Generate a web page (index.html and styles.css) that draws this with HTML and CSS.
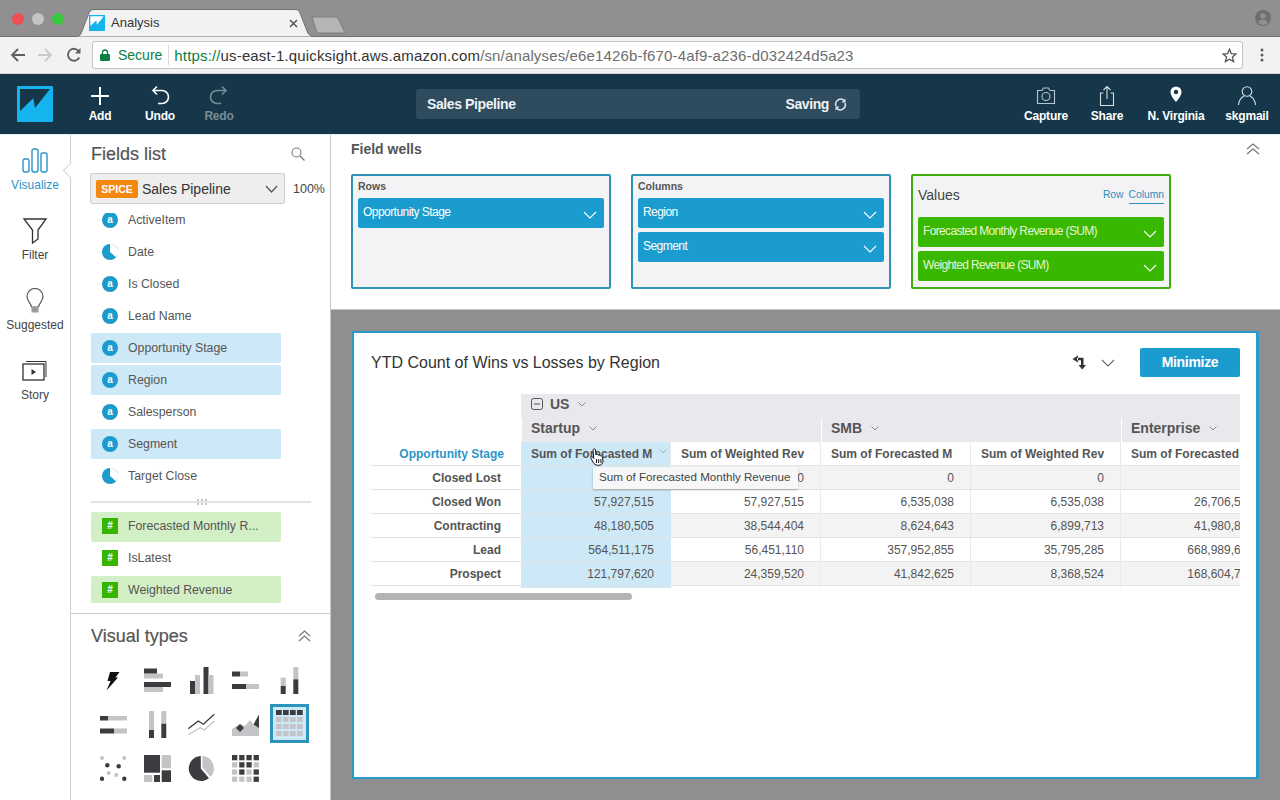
FILE: index.html
```html
<!DOCTYPE html>
<html lang="en">
<head>
<meta charset="utf-8">
<title>Analysis</title>
<link rel="stylesheet" href="styles.css">
</head>
<body>
<div class="page">
  <div class="tabstrip">
    <div class="lights"><i class="light red"></i><i class="light grey"></i><i class="light green"></i></div>
    <div class="tab">
      <svg class="tab-shape" width="242" height="28" viewBox="0 0 242 28"><path d="M0 28 C6 28 7 25 8 22 L15 4 C16 1 18 .5 21 .5 H220 C223 .5 225 1 226 4 L233 22 C234 25 236 28 242 28 Z" fill="#f2f2f4" stroke="#6f6e70"/></svg>
      <svg class="favicon" width="16" height="16" viewBox="0 0 36 36"><rect width="36" height="36" fill="#15b4ee"/><path d="M3 3H33L18 22 16.300 12.300 3 25Z" fill="#fff"/></svg>
      <span class="tab-title">Analysis</span>
      <svg class="tab-close" width="9" height="9" viewBox="0 0 9 9"><path d="M1 1 8 8M8 1 1 8" stroke="#555" stroke-width="1.500"/></svg>
    </div>
    <svg class="newtab" width="36" height="18" viewBox="0 0 36 18"><path d="M1 1H24C26 1 27 2 28 4L34 17H9C7 17 6 16 5.500 15Z" fill="#b5b4b6" stroke="#7d7c7e"/></svg>
    <svg class="profile" width="16" height="16" viewBox="0 0 16 16"><circle cx="8" cy="8" r="8" fill="#6e6d6f"/><circle cx="8" cy="6" r="2.800" fill="#918f91"/><path d="M3 12.500C4 10 6 9.700 8 9.700S12 10 13 12.500C12 14 10 15 8 15S4 14 3 12.500Z" fill="#918f91"/></svg>
  </div>

  <div class="toolbar">
    <svg class="nav-ico" width="16" height="16" viewBox="0 0 16 16"><path d="M15 8H2M8 2 2 8l6 6" fill="none" stroke="#5f5f5f" stroke-width="1.800"/></svg>
    <svg class="nav-ico fwd" width="16" height="16" viewBox="0 0 16 16"><path d="M1 8H14M8 2l6 6-6 6" fill="none" stroke="#c9c9c9" stroke-width="1.800"/></svg>
    <svg class="nav-ico" width="16" height="16" viewBox="0 0 16 16"><path d="M13.300 10.500A6 6 0 1 1 13 4.500" fill="none" stroke="#5f5f5f" stroke-width="1.800"/><path d="M14.500 1V6.500H9Z" fill="#5f5f5f"/></svg>
    <div class="omnibox">
      <svg class="lock" width="10" height="12" viewBox="0 0 10 12"><rect y="5" width="10" height="7" rx="1" fill="#0b8043"/><path d="M2.500 5.500V3.500a2.500 2.500 0 0 1 5 0v2" fill="none" stroke="#0b8043" stroke-width="1.300"/></svg>
      <span class="secure">Secure</span>
      <i class="omni-sep"></i>
      <span class="url"><span class="scheme">https://</span><span class="host">us-east-1.quicksight.aws.amazon.com</span><span class="path">/sn/analyses/e6e1426b-f670-4af9-a236-d032424d5a23</span></span>
      <svg class="star" width="15" height="15" viewBox="0 0 15 15"><path d="M7.500 1.300 9.300 5.600 14 6 10.400 9 11.500 13.600 7.500 11.200 3.500 13.600 4.600 9 1 6 5.700 5.600Z" fill="none" stroke="#555" stroke-width="1.300"/></svg>
    </div>
    <svg class="menu-dots" width="4" height="14" viewBox="0 0 4 14"><circle cx="2" cy="2" r="1.500" fill="#5f5f5f"/><circle cx="2" cy="7" r="1.500" fill="#5f5f5f"/><circle cx="2" cy="12" r="1.500" fill="#5f5f5f"/></svg>
  </div>

  <header class="apphead">
    <svg class="logo" width="36" height="36" viewBox="0 0 36 36"><rect width="36" height="36" rx="1" fill="#15b4ee"/><path d="M3 3H33L18 22 16.300 12.300 3 25Z" fill="#153749"/></svg>
    <div class="act w60"><svg width="22" height="22" viewBox="0 0 22 22"><path d="M11 2V20M2 11H20" stroke="#fff" stroke-width="2"/></svg><span>Add</span></div>
    <div class="act w60"><svg width="22" height="22" viewBox="0 0 22 22"><path d="M5 5.500H13A6 6 0 0 1 13 18.500H9" fill="none" stroke="#fff" stroke-width="1.600"/><path d="M8 1.500 4 5.500 8 9.500" fill="none" stroke="#fff" stroke-width="1.600"/></svg><span>Undo</span></div>
    <div class="act w60 off"><svg width="22" height="22" viewBox="0 0 22 22"><path d="M17 5.500H9A6 6 0 0 0 9 18.500H13" fill="none" stroke="#7b8c96" stroke-width="1.600"/><path d="M14 1.500 18 5.500 14 9.500" fill="none" stroke="#7b8c96" stroke-width="1.600"/></svg><span>Redo</span></div>
    <div class="titlebox">
      <span class="titlebox-name">Sales Pipeline</span>
      <span class="titlebox-state">Saving</span>
      <svg width="13" height="13" viewBox="0 0 13 13"><path d="M2 8A5 5 0 0 1 10.500 3M11 5A5 5 0 0 1 2.500 10" fill="none" stroke="#dfe5e9" stroke-width="1.500"/><path d="M11.500 .5V4.500H7.500ZM1.500 12.500V8.500H5.500Z" fill="#dfe5e9"/></svg>
    </div>
    <div class="act w60 first-right"><svg width="22" height="22" viewBox="0 0 22 22"><path d="M2.500 5.500H7L8.500 3H13.500L15 5.500H19.500V18.500H2.500Z" fill="none" stroke="#b9c5cc" stroke-width="1.100"/><circle cx="11" cy="11.500" r="4" fill="none" stroke="#b9c5cc" stroke-width="1.100"/></svg><span>Capture</span></div>
    <div class="act w62"><svg width="22" height="22" viewBox="0 0 22 22"><path d="M7.500 8H4.500V20.500H17.500V8H14.500M11 14V1.500M7.500 5 11 1.500 14.500 5" fill="none" stroke="#d5dde1" stroke-width="1.100"/></svg><span>Share</span></div>
    <div class="act w76"><svg width="22" height="22" viewBox="0 0 22 22"><path fill-rule="evenodd" d="M11 1.500A5.500 5.500 0 0 0 5.500 7C5.500 10.500 9 14.500 11 17 13 14.500 16.500 10.500 16.500 7A5.500 5.500 0 0 0 11 1.500ZM11 4.800A2.200 2.200 0 1 1 11 9.200 2.200 2.200 0 0 1 11 4.800Z" fill="#fff"/></svg><span>N. Virginia</span></div>
    <div class="act w66"><svg width="22" height="22" viewBox="0 0 22 22"><circle cx="11" cy="6.500" r="4.800" fill="none" stroke="#d5dde1" stroke-width="1.100"/><path d="M2.500 20C3 15 6 12 8 11M19.500 20C19 15 16 12 14 11" fill="none" stroke="#d5dde1" stroke-width="1.100"/></svg><span>skgmail</span></div>
  </header>

  <div class="workspace">
    <nav class="rail">
      <div class="rail-item active"><svg width="28" height="26" viewBox="0 0 28 26"><g fill="none" stroke="#2a95c5" stroke-width="1.400"><rect x="2" y="11" width="6" height="13" rx="2"/><rect x="11" y="1" width="6" height="23" rx="2"/><rect x="20" y="5" width="6" height="19" rx="2"/></g></svg><span>Visualize</span></div>
      <div class="rail-item"><svg width="28" height="26" viewBox="0 0 28 26"><path d="M3 1H25L17 12V21L11.500 25V12Z" fill="none" stroke="#333" stroke-width="1.300"/></svg><span>Filter</span></div>
      <div class="rail-item"><svg width="28" height="26" viewBox="0 0 28 26"><path d="M10.500 19C10 15 6 13 6 8.500A8 8 0 0 1 22 8.500C22 13 18 15 17.500 19Z" fill="none" stroke="#555" stroke-width="1.200"/><rect x="10.500" y="19.500" width="7" height="5" fill="#999"/></svg><span>Suggested</span></div>
      <div class="rail-item"><svg width="28" height="26" viewBox="0 0 28 26"><path d="M5 3.500H25V19" fill="none" stroke="#333" stroke-width="1"/><rect x="2" y="6" width="21" height="16" fill="#fff" stroke="#333" stroke-width="1.300"/><path d="M10.500 11V17L15 14Z" fill="#333"/></svg><span>Story</span></div>
    </nav>

    <aside class="sidebar">
      <i class="notch"></i>
      <section class="fields">
        <div class="fields-head"><h2>Fields list</h2><svg width="14" height="14" viewBox="0 0 14 14"><circle cx="5.500" cy="5.500" r="4.500" fill="none" stroke="#777" stroke-width="1.100"/><path d="M9 9 13.500 13.500" stroke="#777" stroke-width="1.300"/></svg></div>
        <div class="dataset-row">
          <div class="dataset"><b class="spice">SPICE</b><span class="dataset-name">Sales Pipeline</span><svg class="chev" width="13" height="8" viewBox="0 0 13 8"><path d="M1 1 6.500 7 12 1" fill="none" stroke="#555" stroke-width="1.200"/></svg></div>
          <span class="pct">100%</span>
        </div>
        <ul class="flist top">
          <li class="f"><i class="dim">a</i>ActiveItem</li>
          <li class="f"><svg class="clock" width="16" height="16" viewBox="0 0 16 16"><circle cx="8" cy="8" r="8" fill="#1a9ccf"/><path d="M8 8V0A8 8 0 0 1 14 13.300Z" fill="#fff"/></svg>Date</li>
          <li class="f"><i class="dim">a</i>Is Closed</li>
          <li class="f"><i class="dim">a</i>Lead Name</li>
          <li class="f sel"><i class="dim">a</i>Opportunity Stage</li>
          <li class="f sel"><i class="dim">a</i>Region</li>
          <li class="f"><i class="dim">a</i>Salesperson</li>
          <li class="f sel"><i class="dim">a</i>Segment</li>
          <li class="f"><svg class="clock" width="16" height="16" viewBox="0 0 16 16"><circle cx="8" cy="8" r="8" fill="#1a9ccf"/><path d="M8 8V0A8 8 0 0 1 14 13.300Z" fill="#fff"/></svg>Target Close</li>
        </ul>
        <div class="splitter"><span class="grip"></span></div>
        <ul class="flist bottom">
          <li class="f msel"><i class="meas">#</i>Forecasted Monthly R...</li>
          <li class="f"><i class="meas">#</i>IsLatest</li>
          <li class="f msel"><i class="meas">#</i>Weighted Revenue</li>
        </ul>
      </section>
      <section class="vtypes">
        <div class="vt-head"><h2>Visual types</h2><svg width="13" height="12" viewBox="0 0 13 12"><path d="M1 6 6.500 1 12 6M1 11 6.500 6 12 11" fill="none" stroke="#777" stroke-width="1.200"/></svg></div>
        <div class="vt-grid">
          <div class="vt"><svg width="27" height="27" viewBox="0 0 27 27"><path d="M10 5H19.500L15.500 10.500H18L6.500 23.500 10.500 14H7.500Z" fill="#111"/></svg></div>
          <div class="vt"><svg width="27" height="27" viewBox="0 0 27 27"><rect class="l" y="6.500" width="19" height="5"/><rect class="d" y="1.500" width="13" height="5"/><rect class="l" y="20" width="19" height="5"/><rect class="d" y="15" width="27" height="5"/></svg></div>
          <div class="vt"><svg width="27" height="27" viewBox="0 0 27 27"><rect class="d" x="2" y="14" width="5" height="13"/><rect class="l" x="7" y="8" width="5" height="19"/><rect class="d" x="15.500" width="5" height="27"/><rect class="l" x="20.500" y="8" width="5" height="19"/></svg></div>
          <div class="vt"><svg width="27" height="27" viewBox="0 0 27 27"><rect class="d" y="4.500" width="8" height="5"/><rect class="l" x="8" y="4.500" width="8" height="5"/><rect class="d" y="17" width="14" height="5"/><rect class="l" x="14" y="17" width="13" height="5"/></svg></div>
          <div class="vt"><svg width="27" height="27" viewBox="0 0 27 27"><rect class="l" x="4.700" y="10.700" width="5" height="8.300"/><rect class="d" x="4.700" y="19" width="5" height="8"/><rect class="l" x="17.300" width="5" height="12.300"/><rect class="d" x="17.300" y="12.300" width="5" height="14.700"/></svg></div>

          <div class="vt"><svg width="27" height="27" viewBox="0 0 27 27"><rect class="d" y="5" width="8" height="4.500"/><rect class="l" x="8" y="5" width="19" height="4.500"/><rect class="d" y="17.500" width="14" height="5"/><rect class="l" x="14" y="17.500" width="13" height="5"/></svg></div>
          <div class="vt"><svg width="27" height="27" viewBox="0 0 27 27"><rect class="l" x="5" width="5" height="19"/><rect class="d" x="5" y="19" width="5" height="8"/><rect class="l" x="17.300" width="5" height="12.700"/><rect class="d" x="17.300" y="12.700" width="5" height="14.300"/></svg></div>
          <div class="vt"><svg width="27" height="27" viewBox="0 0 27 27"><path d="M.5 23.500 12 16.700 16.300 19 26.300 10" fill="none" stroke="#c4c4c4" stroke-width="1.300"/><path d="M.3 17.700 10.300 10 15.300 13.300 26.300 3.300" fill="none" stroke="#3c3c40" stroke-width="1.300"/></svg></div>
          <div class="vt"><svg width="27" height="27" viewBox="0 0 27 27"><path class="l" d="M0 25V18L8 13 13 15 18 9 22 14 27 13V25Z"/><path class="d" d="M8 13 12 17 8 21 4 17ZM27 3.500V17L21.500 13.500Z"/></svg></div>
          <div class="vt chosen"><svg width="27" height="27" viewBox="0 0 27 27"><rect class="d" width="5.700" height="5" /><rect class="d" x="7" width="5.700" height="5"/><rect class="d" x="14" width="5.700" height="5"/><rect class="d" x="21" width="5.700" height="5"/><rect class="g" y="7" width="5.700" height="5"/><rect class="g" x="7" y="7" width="5.700" height="5"/><rect class="g" x="14" y="7" width="5.700" height="5"/><rect class="g" x="21" y="7" width="5.700" height="5"/><rect class="g" y="14" width="5.700" height="5"/><rect class="g" x="7" y="14" width="5.700" height="5"/><rect class="g" x="14" y="14" width="5.700" height="5"/><rect class="g" x="21" y="14" width="5.700" height="5"/><rect class="g" y="21" width="5.700" height="5"/><rect class="g" x="7" y="21" width="5.700" height="5"/><rect class="g" x="14" y="21" width="5.700" height="5"/><rect class="g" x="21" y="21" width="5.700" height="5"/></svg></div>

          <div class="vt"><svg width="27" height="27" viewBox="0 0 27 27"><circle class="l" cx="2" cy="3" r="2"/><circle class="l" cx="24.300" cy="3" r="2"/><circle class="d" cx="7.300" cy="10.300" r="2.200"/><circle class="d" cx="18.700" cy="11.300" r="2.200"/><circle class="l" cx="8.700" cy="18" r="2"/><circle class="l" cx="16.300" cy="20" r="2"/><circle class="d" cx="2" cy="23.700" r="2.200"/><circle class="d" cx="24.300" cy="23.700" r="2.200"/></svg></div>
          <div class="vt"><svg width="27" height="27" viewBox="0 0 27 27"><rect class="d" width="16" height="17.700"/><rect class="l" x="17.700" width="9.300" height="13.300"/><rect class="l" y="20" width="8.300" height="7"/><rect class="d" x="10" y="20" width="6" height="7"/><rect class="d" x="17.700" y="15.300" width="9.300" height="11.700"/></svg></div>
          <div class="vt"><svg width="27" height="27" viewBox="0 0 27 27"><path class="d" d="M12.800 1A12.500 12.500 0 1 0 21 23.300L12.800 13.500Z"/><path class="l" d="M14.500 1A12.500 12.500 0 0 1 22.500 22L14.500 12.500Z"/></svg></div>
          <div class="vt"><svg width="27" height="27" viewBox="0 0 27 27"><rect class="d" width="5.300" height="5.300"/><rect class="d" x="7.200" width="5.300" height="5.300"/><rect class="d" x="14.400" width="5.300" height="5.300"/><rect class="d" x="21.600" width="5.300" height="5.300"/><rect class="l" y="7.200" width="5.300" height="5.300"/><rect class="d" x="7.200" y="7.200" width="5.300" height="5.300"/><rect class="d" x="14.400" y="7.200" width="5.300" height="5.300"/><rect class="l" x="21.600" y="7.200" width="5.300" height="5.300"/><rect class="l" y="14.400" width="5.300" height="5.300"/><rect class="d" x="7.200" y="14.400" width="5.300" height="5.300"/><rect class="l" x="14.400" y="14.400" width="5.300" height="5.300"/><rect class="d" x="21.600" y="14.400" width="5.300" height="5.300"/><rect class="l" y="21.600" width="5.300" height="5.300"/><rect class="l" x="7.200" y="21.600" width="5.300" height="5.300"/><rect class="l" x="14.400" y="21.600" width="5.300" height="5.300"/><rect class="d" x="21.600" y="21.600" width="5.300" height="5.300"/></svg></div>
        </div>
      </section>
    </aside>

    <main class="content">
      <section class="wells">
        <div class="wells-head"><h3>Field wells</h3><svg width="14" height="12" viewBox="0 0 14 12"><path d="M1 6 7 1 13 6M1 11 7 6 13 11" fill="none" stroke="#777" stroke-width="1.200"/></svg></div>
        <div class="wells-row">
          <div class="well">
            <div class="well-label">Rows</div>
            <div class="pill">Opportunity Stage<svg width="14" height="8" viewBox="0 0 14 8"><path d="M1 1 7 7 13 1" fill="none" stroke="#fff" stroke-width="1.100"/></svg></div>
          </div>
          <div class="well">
            <div class="well-label">Columns</div>
            <div class="pill">Region<svg width="14" height="8" viewBox="0 0 14 8"><path d="M1 1 7 7 13 1" fill="none" stroke="#fff" stroke-width="1.100"/></svg></div>
            <div class="pill">Segment<svg width="14" height="8" viewBox="0 0 14 8"><path d="M1 1 7 7 13 1" fill="none" stroke="#fff" stroke-width="1.100"/></svg></div>
          </div>
          <div class="well values">
            <div class="values-head"><span class="values-title">Values</span><span class="vlink">Row</span><span class="vlink on">Column</span></div>
            <div class="pill">Forecasted Monthly Revenue (SUM)<svg width="14" height="8" viewBox="0 0 14 8"><path d="M1 1 7 7 13 1" fill="none" stroke="#fff" stroke-width="1.100"/></svg></div>
            <div class="pill">Weighted Revenue (SUM)<svg width="14" height="8" viewBox="0 0 14 8"><path d="M1 1 7 7 13 1" fill="none" stroke="#fff" stroke-width="1.100"/></svg></div>
          </div>
        </div>
      </section>

      <section class="stage">
        <article class="visual">
          <div class="visual-head">
            <h1>YTD Count of Wins vs Losses by Region</h1>
            <svg class="swap" width="15" height="15" viewBox="0 0 15 15"><path d="M6 .5 .5 4 6 7.500ZM5 2.800H11.500V10H9V5.200H5Z" fill="#333"/><path d="M6.500 10H14L10.250 14.500Z" fill="#333"/></svg>
            <svg class="vchev" width="14" height="8" viewBox="0 0 14 8"><path d="M1 1 7 7 13 1" fill="none" stroke="#666" stroke-width="1.100"/></svg>
            <button class="minimize">Minimize</button>
          </div>
          <div class="pivot">
            <table>
              <colgroup><col class="c"><col class="c"><col class="c"><col class="c"><col class="c"><col class="c"></colgroup>
              <tr class="h1"><th class="blank"></th><th class="grp" colspan="5"><svg class="minus" width="12" height="12" viewBox="0 0 12 12"><rect x=".5" y=".5" width="11" height="11" rx="2" fill="none" stroke="#555"/><path d="M3 6H9" stroke="#555"/></svg>US<svg class="mini" width="8" height="5" viewBox="0 0 8 5"><path d="M.5 .5 4 4 7.500 .5" fill="none" stroke="#888"/></svg></th></tr>
              <tr class="h2"><th class="blank"></th><th class="grp" colspan="2">Startup<svg class="mini" width="8" height="5" viewBox="0 0 8 5"><path d="M.5 .5 4 4 7.500 .5" fill="none" stroke="#888"/></svg></th><th class="grp" colspan="2">SMB<svg class="mini" width="8" height="5" viewBox="0 0 8 5"><path d="M.5 .5 4 4 7.500 .5" fill="none" stroke="#888"/></svg></th><th class="grp">Enterprise<svg class="mini" width="8" height="5" viewBox="0 0 8 5"><path d="M.5 .5 4 4 7.500 .5" fill="none" stroke="#888"/></svg></th></tr>
              <tr class="h3"><th class="rowtitle">Opportunity Stage</th><th class="m hl"><span>Sum of Forecasted M</span><svg class="mini" width="8" height="5" viewBox="0 0 8 5"><path d="M.5 .5 4 4 7.500 .5" fill="none" stroke="#aaa"/></svg></th><th class="m"><span>Sum of Weighted Rev</span></th><th class="m"><span>Sum of Forecasted M</span></th><th class="m"><span>Sum of Weighted Rev</span></th><th class="m"><span>Sum of Forecasted M</span></th></tr>
              <tr class="odd"><th class="rh">Closed Lost</th><td class="hl"></td><td>0</td><td>0</td><td>0</td><td></td></tr>
              <tr><th class="rh">Closed Won</th><td class="hl">57,927,515</td><td>57,927,515</td><td>6,535,038</td><td>6,535,038</td><td>26,706,515</td></tr>
              <tr class="odd"><th class="rh">Contracting</th><td class="hl">48,180,505</td><td>38,544,404</td><td>8,624,643</td><td>6,899,713</td><td>41,980,815</td></tr>
              <tr><th class="rh">Lead</th><td class="hl">564,511,175</td><td>56,451,110</td><td>357,952,855</td><td>35,795,285</td><td>668,989,615</td></tr>
              <tr class="odd"><th class="rh">Prospect</th><td class="hl">121,797,620</td><td>24,359,520</td><td>41,842,625</td><td>8,368,524</td><td>168,604,715</td></tr>
              <tr class="tail"><th></th><td class="hl"></td><td></td><td></td><td></td><td></td></tr>
            </table>
          </div>
          <div class="hscroll"><i></i></div>
          <div class="tooltip">Sum of Forecasted Monthly Revenue</div>
          <svg class="hand" width="14" height="18" viewBox="0 0 14 18"><path d="M3.500 1.200C4.400 .6 5.300 1 5.500 2L6 7 6.500 6.300C7.300 5.900 8 6.200 8.300 7L8.500 7.300C9.300 6.800 10 7.100 10.300 7.900 11.200 7.500 12.200 8 12.500 9L13 13C13 15.500 11.500 17.300 8.500 17.300 5.500 17.300 4 16 3 14L.8 10C.4 9 1.500 8 2.500 8.800L3.800 10.500 3 2.500C3 2 3.100 1.500 3.500 1.200Z" fill="#fff" stroke="#111" stroke-width="1"/><path d="M6.500 11V15M8.700 11V15M10.900 11V15" stroke="#111"/></svg>
        </article>
      </section>
    </main>
  </div>
</div>
</body>
</html>
```

FILE: styles.css
```css
* { box-sizing: border-box; }
html, body { margin: 0; padding: 0; }
body { font-family: "Liberation Sans", Arial, sans-serif; color: #555; background: #fff; }
h1, h2, h3, ul { margin: 0; padding: 0; }
ul { list-style: none; }
i { font-style: normal; display: block; }
svg { display: block; flex: none; }

.page { width: 1280px; height: 800px; overflow: hidden; display: flex; flex-direction: column; }

/* browser chrome */
.tabstrip { height: 37px; flex: none; background: #918f91; display: flex; align-items: flex-end; border-bottom: 1px solid #6f6e70; padding-left: 12px; position: relative; }
.lights { display: flex; gap: 8px; align-self: flex-start; margin-top: 13px; margin-right: 10px; }
.light { width: 12px; height: 12px; border-radius: 50%; }
.light.red { background: #ee4f55; }
.light.grey { background: #c4c3c5; }
.light.green { background: #37c83f; }
.tab { width: 242px; height: 28px; position: relative; display: flex; align-items: center; padding-left: 15px; margin-bottom: -1px; }
.tab-shape { position: absolute; left: 0; top: 0; }
.favicon, .tab-title, .tab-close { position: relative; }
.tab-title { font-size: 13px; color: #333; margin: -2px 0 0 6px; width: 178px; }
.newtab { margin-left: -5px; margin-bottom: 2px; }
.profile { position: absolute; right: 9px; top: 10px; }

.toolbar { height: 37px; flex: none; background: #f2f2f2; display: flex; align-items: center; border-bottom: 1px solid #d5d5d5; padding-left: 10px; }
.nav-ico { margin-right: 11px; }
.nav-ico.fwd { margin-right: 13px; }
.nav-ico:nth-child(3) { margin-right: 10px; }
.omnibox { width: 1151px; height: 28px; background: #fff; border: 1px solid #c4c4c4; border-radius: 3px; display: flex; align-items: center; padding-left: 7px; margin-right: 17px; }
.lock { margin-right: 8px; }
.secure { color: #0b8043; font-size: 14px; }
.omni-sep { width: 1px; height: 20px; background: #dcdcdc; margin: 0 5px 0 6px; }
.url { font-size: 15px; letter-spacing: .15px; white-space: nowrap; flex: 1; }
.scheme { color: #0b8043; }
.host { color: #333; }
.path { color: #6e6e6e; }
.star { margin-right: 5px; }

/* application header */
.apphead { height: 61px; flex: none; background: #153749; display: flex; align-items: flex-start; padding-left: 17px; color: #fff; border-bottom: 1px solid #e3eef5; }
.logo { margin: 12px 17px 0 0; }
.act { display: flex; flex-direction: column; align-items: center; padding-top: 11px; font-size: 12px; font-weight: bold; letter-spacing: -.2px; flex: none; }
.act span { margin-top: 2px; line-height: 15px; white-space: nowrap; }
.act.off { color: #7b8c96; margin-left: -1px; }
.w60 { width: 60px; }
.w62 { width: 62px; }
.w76 { width: 76px; }
.w66 { width: 66px; }
.titlebox { width: 444px; height: 30px; margin: 15px 0 0 167px; border-radius: 3px; background: #2f4c5f; display: flex; align-items: center; padding: 0 13px 0 11px; font-size: 14px; font-weight: bold; letter-spacing: -.4px; color: #eef2f4; }
.titlebox-name { flex: 1; }
.titlebox-state { margin-right: 5px; }
.first-right { margin-left: auto; }

/* workspace */
.workspace { flex: 1; min-height: 0; display: flex; }
.rail { width: 71px; flex: none; background: #fff; border-right: 1px solid #cfcfcf; padding-top: 0; }
.rail-item { height: 70px; display: flex; flex-direction: column; align-items: center; padding-top: 13px; font-size: 12px; color: #444; }
.rail-item span { margin-top: 4px; line-height: 14px; }
.rail-item.active { color: #2a95c5; }

.sidebar { width: 260px; flex: none; display: flex; flex-direction: column; border-right: 1px solid #c9c9c9; position: relative; background: #fff; }
.notch { position: absolute; left: -6px; top: 30px; width: 11px; height: 11px; background: #fff; border-left: 1px solid #d8d8d8; border-bottom: 1px solid #d8d8d8; transform: rotate(45deg); }
.fields { height: 479px; flex: none; padding-left: 19px; border-bottom: 1px solid #c9c9c9; }
.fields-head { display: flex; align-items: center; height: 38px; padding: 0 25px 0 1px; justify-content: space-between; }
.fields-head h2, .vt-head h2 { font-size: 18px; font-weight: normal; color: #555; -webkit-text-stroke: .2px #555; }
.dataset-row { display: flex; align-items: center; }
.dataset { width: 195px; height: 31px; margin-left: 0; background: #eeeeee; border: 1px solid #cfcfcf; border-radius: 2px; display: flex; align-items: center; padding-left: 5px; }
.spice { width: 42px; height: 18px; line-height: 18px; text-align: center; background: #f5890f; color: #fff; font-size: 10.5px; border-radius: 2px; }
.dataset-name { font-size: 14px; color: #333; margin-left: 4px; flex: 1; }
.chev { margin-right: 6px; }
.pct { font-size: 12.500px; color: #444; margin-left: 8px; }

.flist { overflow: hidden; margin-left: 1px; width: 190px; }
.flist.top { height: 288px; margin-top: 9px; }
.flist.top .f:first-child { margin-top: -8px; }
.flist.bottom { height: 91px; }
.f { height: 30px; margin-bottom: 2px; display: flex; align-items: center; padding-left: 11px; font-size: 12.300px; color: #555; white-space: nowrap; border-radius: 2px; }
.flist.bottom .f { padding-bottom: 2px; }
.f.sel { background: #cde8f6; }
.f.msel { background: #d3efc5; }
.dim { width: 16px; height: 16px; border-radius: 50%; background: #1a9ccf; color: #fff; font-size: 10px; font-weight: bold; line-height: 15px; text-align: center; margin-right: 10px; flex: none; }
.clock { margin-right: 10px; }
.meas { width: 16px; height: 16px; background: #35b400; color: #fff; font-size: 10px; font-weight: bold; line-height: 16px; text-align: center; margin-right: 10px; flex: none; }
.splitter { width: 220px; margin-left: 1px; height: 11px; display: flex; justify-content: center; background: linear-gradient(#e3e3e3, #e3e3e3) 0 0 / 100% 2px no-repeat; }
.grip { width: 11px; height: 8px; margin-top: -3px; background-image: radial-gradient(circle, #c6c6c6 .8px, transparent 1px); background-size: 4px 4px; }

.vtypes { flex: 1; padding-left: 20px; }
.vt-head { display: flex; align-items: center; justify-content: space-between; height: 44px; padding-right: 19px; }
.vt-grid { display: grid; grid-template-columns: repeat(5, 44px); grid-auto-rows: 44px; }
.vt { display: flex; align-items: center; justify-content: center; }
.vt .d { fill: #3c3c40; }
.vt .l { fill: #c4c4c6; }
.vt .g { fill: #c4c4ca; }
.vt.chosen { width: 39px; height: 39px; margin: 2px 0 0 3px; background: #cfe8f5; border: 3px solid #2a95b8; }

/* field wells */
.content { flex: 1; min-width: 0; display: flex; flex-direction: column; }
.wells { height: 175px; flex: none; padding: 0 20px; background: #fff; border-bottom: 1px solid #c4c4c4; }
.wells-head { height: 39px; display: flex; align-items: center; justify-content: space-between; padding-bottom: 12px; }
.wells-head h3 { font-size: 14px; color: #555; }
.wells-row { display: flex; gap: 20px; }
.well { width: 260px; height: 115px; background: #f3f3f5; border: 2px solid #2f93b3; border-radius: 2px; padding: 0 5px; }
.well-label { font-size: 10.500px; font-weight: bold; height: 22px; line-height: 20px; color: #555; }
.pill { height: 30px; background: #1a9ccf; color: #fff; font-size: 12px; letter-spacing: -.55px; border-radius: 2px; margin-bottom: 4px; display: flex; align-items: center; justify-content: space-between; padding: 0 7px 3px 5px; white-space: nowrap; }
.pill svg { margin-top: 7px; }
.well.values { border-color: #3cae0d; }
.values .pill { background: #39b800; color: #e3f7d8; letter-spacing: -.65px; }
.values-head { display: flex; align-items: flex-start; height: 41px; }
.values-title { font-size: 14px; color: #444; flex: 1; line-height: 38px; }
.vlink { font-size: 10.300px; color: #2a8fbd; margin-left: 5px; padding-top: 13px; height: 28px; line-height: 12px; }
.vlink.on { border-bottom: 1px solid #2a8fbd; }

/* visual */
.stage { flex: 1; min-height: 0; background: #8f8e90; padding: 21px; }
.visual { height: 448px; background: #fff; border: 2px solid #2a9acb; border-right-width: 3px; position: relative; padding: 0 16px 0 17px; }
.visual-head { height: 61px; display: flex; align-items: center; padding-bottom: 2px; }
.visual-head h1 { font-size: 16px; font-weight: normal; color: #333; flex: 1; }
.swap { margin-right: 14px; }
.vchev { margin-right: 25px; }
.minimize { width: 100px; height: 29px; border: 0; border-radius: 2px; background: #1a9ccf; color: #fff; font: bold 14px "Liberation Sans", Arial, sans-serif; letter-spacing: -.3px; padding: 0 0 2px; }

.pivot { width: 869px; overflow: hidden; }
.pivot table { width: 900px; table-layout: fixed; border-collapse: separate; border-spacing: 0; font-size: 12px; }
.pivot .c { width: 150px; }
.pivot th, .pivot td { padding: 0; height: 24px; white-space: nowrap; }
.blank { background: #fff; }
.pivot .grp { background: #e9e8ec; text-align: left; font-size: 14px; color: #555; padding: 0 0 5px 10px; }
.grp svg { display: inline-block; vertical-align: 2px; }
.grp .mini { margin-left: 9px; }
.grp .minus { margin-right: 7px; vertical-align: -1px; }
.pivot .h2 .grp { border-left: 1px solid #fff; padding-left: 9px; }
.pivot .rowtitle { text-align: right; color: #2a95cb; padding-right: 17px; background: #fff; border-bottom: 1px solid #e4e4e4; }
.pivot .m { text-align: left; color: #555; padding-left: 10px; background: #fff; border-right: 1px solid #e9e9e9; border-bottom: 1px solid #e4e4e4; }
.m span { display: inline-block; width: 123px; overflow: hidden; vertical-align: middle; }
.m .mini { display: inline-block; margin-left: 5px; vertical-align: 3px; }
.pivot .m.hl { background: #cde8f6; }
.pivot .rh { text-align: right; padding-right: 20px; color: #555; border-bottom: 1px solid #e4e4e4; background: #fff; }
.pivot td { text-align: right; padding-right: 16px; color: #555; border-right: 1px solid #e9e9e9; border-bottom: 1px solid #e4e4e4; }
.pivot td.hl { padding-right: 17px; }
.odd td { background: #f3f3f4; }
.pivot td.hl, .odd td.hl { background: #cde8f6; border-right: 0; }
.pivot .tail th, .pivot .tail td { height: 2px; font-size: 0; line-height: 0; border-bottom: 0; background: #fff; }
.pivot .tail td.hl { background: #cde8f6; }
.hscroll { height: 7px; margin: 5px 0 0 4px; }
.hscroll i { width: 257px; height: 7px; border-radius: 4px; background: #b4b4b6; }
.tooltip { position: absolute; left: 239px; top: 134px; width: 205px; height: 22px; background: #f7f7f7; box-shadow: 0 1px 2px rgba(0,0,0,.3); font-size: 11.600px; line-height: 20px; padding-left: 6px; color: #444; border-radius: 1px; white-space: nowrap; }
.hand { position: absolute; left: 236px; top: 115px; }
```
